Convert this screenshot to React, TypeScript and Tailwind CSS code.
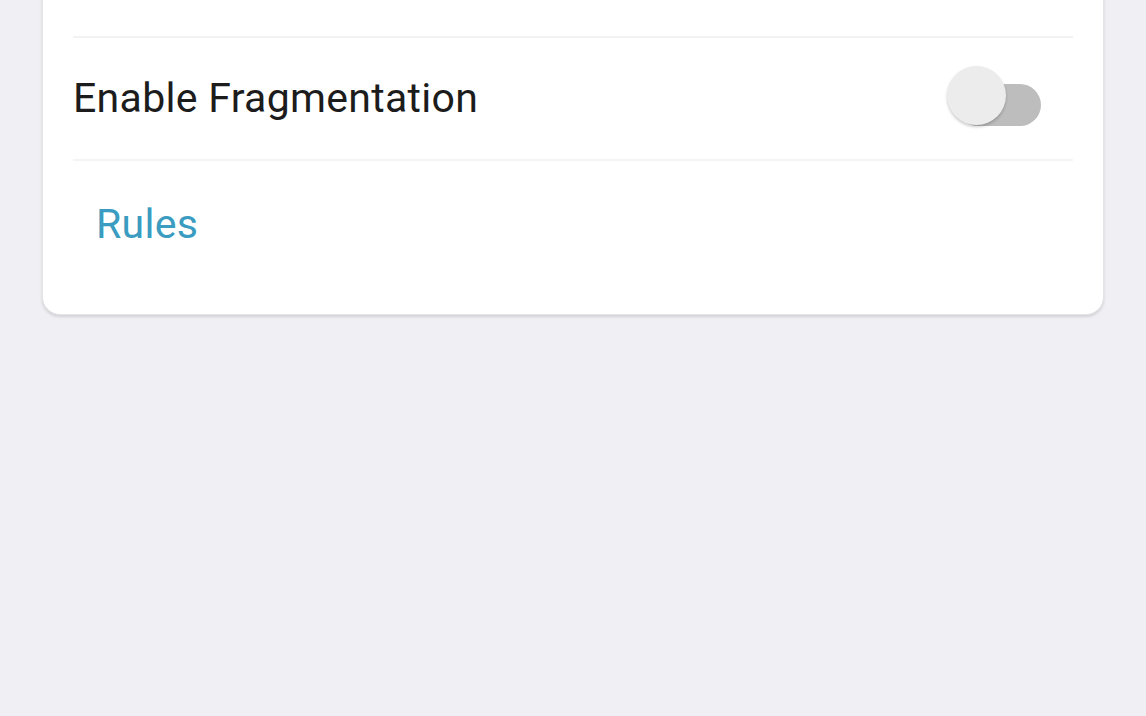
export default function App() {
  return (
    <div className="w-[1146px] h-[716px] bg-[#efeff4] overflow-hidden" style={{ fontFamily: 'Roboto, "Noto Sans", sans-serif' }}>
      <div className="mx-[42px] mt-[-20px] bg-white rounded-b-[18px] border border-[#e3e3e8] shadow-[0_2px_3px_rgba(0,0,0,0.12)]">
        <div className="h-[55px]" />
        <div className="mx-[30px] border-t-2 border-[#f2f2f4]" />
        <div className="mx-[30px] h-[121px] flex items-center justify-between">
          <span className="text-[41px] text-[#1c1c1c] tracking-[0.3px] leading-none pt-[0px]">Enable Fragmentation</span>
          <div className="relative w-[94px] h-[62px] mr-[32px]">
            <div className="absolute left-[10px] right-0 top-[16px] h-[42px] rounded-full bg-[#bdbdbd]" />
            <div className="absolute left-0 top-[-2px] w-[59px] h-[59px] rounded-full bg-[#ececec] shadow-[0_2px_3px_rgba(0,0,0,0.2)]" />
          </div>
        </div>
        <div className="mx-[30px] border-t-2 border-[#f4f4f6]" />
        <div className="h-[153px] px-[53px] pt-[43px]">
          <span className="text-[41px] text-[#3a9cc0] tracking-[0.3px] leading-none">Rules</span>
        </div>
      </div>
    </div>
  );
}
